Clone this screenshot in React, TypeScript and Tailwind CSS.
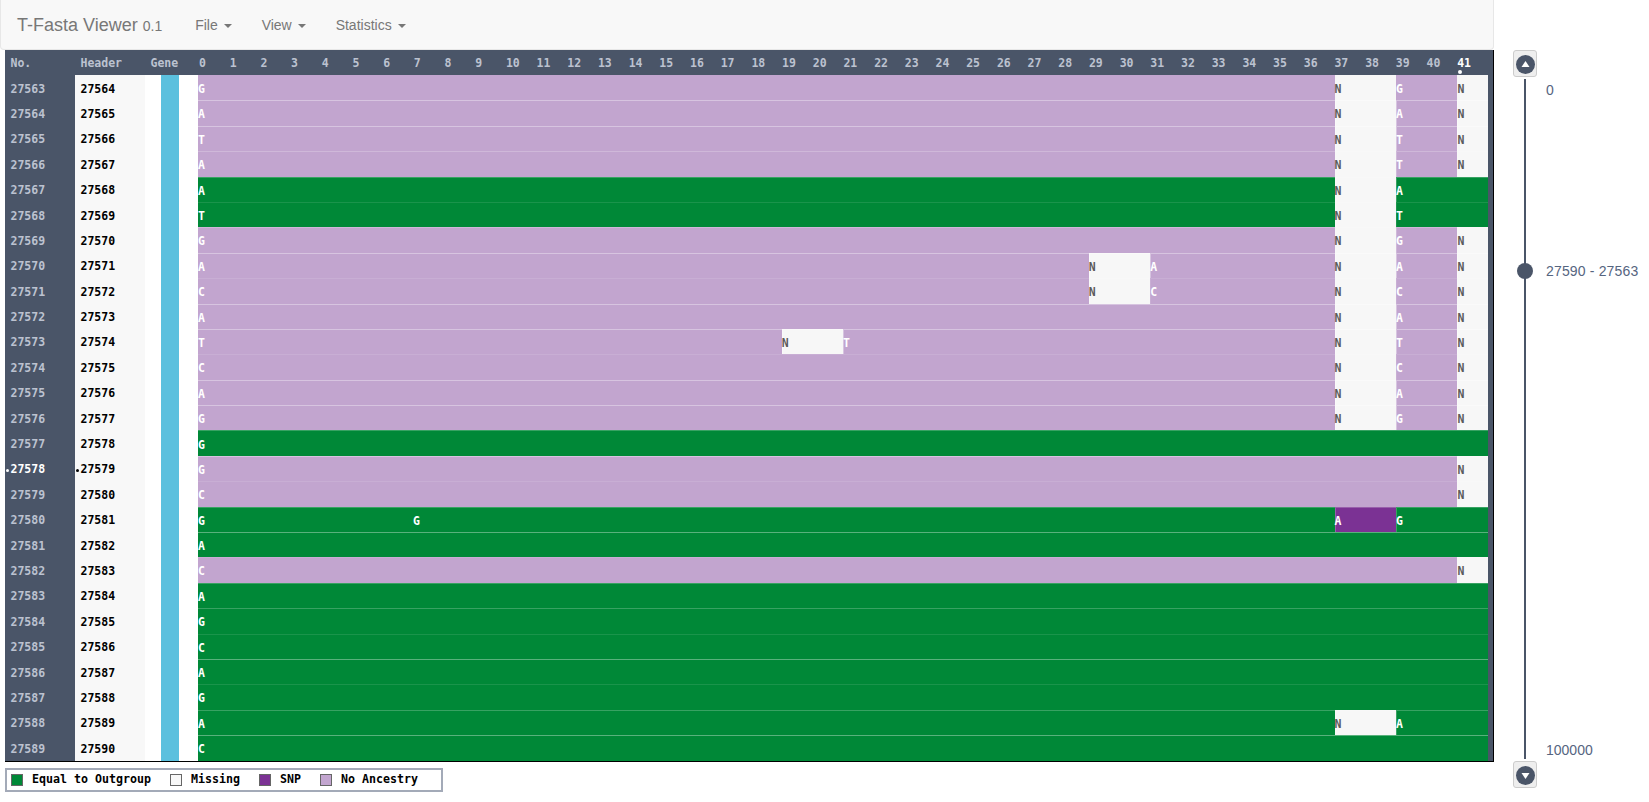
type Kind = "green" | "pur" | "miss" | "snp";
type Seg = [number, number, string, Kind];

const segClass: Record<Kind, string> = {
  green: "bg-[#008837] text-white",
  pur: "bg-[#c2a5cf] text-white",
  miss: "bg-[#f7f7f7] text-[#5c5c5c]",
  snp: "bg-[#7b3294] text-white",
};

// base row: long stretch, missing 37-38, then 39-40, then missing 41
const noAnc = (a: string, b: string = a): Seg[] => [
  [0, 37, a, "pur"],
  [37, 39, "N", "miss"],
  [39, 41, b, "pur"],
  [41, 42, "N", "miss"],
];
const gapped = (a: string, from: number): Seg[] => [
  [0, from, a, "pur"],
  [from, from + 2, "N", "miss"],
  [from + 2, 37, a, "pur"],
  [37, 39, "N", "miss"],
  [39, 41, a, "pur"],
  [41, 42, "N", "miss"],
];
const eqMiss = (a: string): Seg[] => [
  [0, 37, a, "green"],
  [37, 39, "N", "miss"],
  [39, 42, a, "green"],
];
const eq = (a: string): Seg[] => [[0, 42, a, "green"]];
const lastN = (a: string): Seg[] => [
  [0, 41, a, "pur"],
  [41, 42, "N", "miss"],
];

const rows: Seg[][] = [
  noAnc("G"),
  noAnc("A"),
  noAnc("T"),
  noAnc("A", "T"),
  eqMiss("A"),
  eqMiss("T"),
  noAnc("G"),
  gapped("A", 29),
  gapped("C", 29),
  noAnc("A"),
  gapped("T", 19),
  noAnc("C"),
  noAnc("A"),
  noAnc("G"),
  eq("G"),
  lastN("G"),
  lastN("C"),
  [
    [0, 7, "G", "green"],
    [7, 37, "G", "green"],
    [37, 39, "A", "snp"],
    [39, 42, "G", "green"],
  ],
  eq("A"),
  lastN("C"),
  eq("A"),
  eq("G"),
  eq("C"),
  eq("A"),
  eq("G"),
  eqMiss("A"),
  eq("C"),
];

// separator strength differs from row to row in the reference
const none = "border-transparent";
const hi = "border-white/35";
const mid = "border-white/22";
const lo = "border-white/10";
const lines = [
  none, hi, hi, mid, mid, lo, mid, hi, lo, hi, hi, lo, hi, hi,
  mid, hi, lo, mid, hi, lo, mid, mid, lo, hi, lo, mid, hi,
];

const columns = Array.from({ length: 42 }, (_, i) => i);
const FIRST = 27563;
const CURRENT = 27578;

const Caret = () => (
  <span className="ml-[2px] inline-block align-middle w-0 h-0 border-x-4 border-x-transparent border-t-4 border-t-[#777777]" />
);

const NavItem = ({ label }: { label: string }) => (
  <span className="px-[15px] text-sm text-[#777777]">
    {label} <Caret />
  </span>
);

const SliderButton = ({ up }: { up?: boolean }) => (
  <div className="w-6 h-[27px] pt-[2px] bg-[#eeeeee] border border-[#cccccc] rounded-[3px] flex items-center justify-center">
    <svg width="19" height="19" viewBox="0 0 19 19">
      <circle cx="9.5" cy="9.5" r="9.5" fill="#4a5568" />
      <path d={up ? "M9.5 6 L13.5 12 L5.5 12 Z" : "M9.5 13 L13.5 7 L5.5 7 Z"} fill="#ffffff" />
    </svg>
  </div>
);

const LegendItem = ({ color, label }: { color: string; label: string }) => (
  <div className="flex items-center">
    <span className={`w-3 h-3 border border-[#666666] mr-[9px] ${color}`} />
    <span>{label}</span>
  </div>
);

export default function App() {
  return (
    <div className="w-[1649px] h-[802px] overflow-hidden bg-white font-['Liberation_Sans',sans-serif]">
      <nav className="w-[1494px] h-[50px] bg-[#f8f8f8] border border-t-0 border-[#e7e7e7] rounded-b-[4px] flex items-center pl-4">
        <span className="text-lg text-[#777777] mr-[18px]">
          T-Fasta Viewer <span className="text-sm">0.1</span>
        </span>
        <NavItem label="File" />
        <NavItem label="View" />
        <NavItem label="Statistics" />
      </nav>

      <div className="flex">
        <div className="ml-[5px] w-[1489px] font-['DejaVu_Sans_Mono',monospace] font-bold text-[11.5px]">
          <div className="bg-[#4a5568] border-r border-b border-black text-[#bcc2d0]">
            <div className="h-[25px] pt-[2px] flex items-center">
              <div className="w-[70px] pl-[5.5px]">No.</div>
              <div className="w-[70px] pl-[5.5px]">Header</div>
              <div className="w-[53px] pl-[5.5px]">Gene</div>
              <div className="grid grid-cols-[repeat(42,30.7px)]">
                {columns.map((c) => (
                  <div key={c} className={`relative pl-px ${c === 41 ? "text-white" : ""}`}>
                    {c}
                    {c === 41 && (
                      <span className="absolute left-[2px] top-[15px] w-[4px] h-[4px] rounded-full bg-white" />
                    )}
                  </div>
                ))}
              </div>
            </div>

            {rows.map((segs, i) => {
              const no = FIRST + i;
              const active = no === CURRENT;
              return (
                <div key={no} className="h-[25.4px] flex">
                  <div className={`relative w-[70px] pl-[5.5px] pt-[3px] flex items-center ${active ? "text-white" : ""}`}>
                    {active && <span className="absolute left-[1px] top-[13px] w-[3px] h-[3px] rounded-full bg-white" />}
                    {no}
                  </div>
                  <div className="relative w-[70px] pl-[5.5px] pt-[3px] flex items-center bg-[#f8f8f8] text-black">
                    {active && <span className="absolute left-[1px] top-[13px] w-[3px] h-[3px] rounded-full bg-black" />}
                    {no + 1}
                  </div>
                  <div className="w-[53px] bg-white pl-[16px]">
                    <div className="w-[18px] h-full bg-[#5bc0de]" />
                  </div>
                  <div className="grid grid-cols-[repeat(42,30.73px)]">
                    {segs.map(([from, to, letter, kind], j) => {
                      const edge = j > 0 && segs[j - 1][3] !== kind;
                      return (
                        <div
                          key={from}
                          style={{ gridColumn: `${from + 1} / ${to + 1}` }}
                          className={`flex items-center pt-[3px] border-t ${lines[i]} ${segClass[kind]} ${edge ? "border-l" : ""}`}
                        >
                          <span className={edge ? "-ml-px" : ""}>{letter}</span>
                        </div>
                      );
                    })}
                  </div>
                </div>
              );
            })}
          </div>

          <div className="mt-[6px] w-[438px] h-[24px] pt-px border-2 border-[#a3aab8] flex items-center pl-[4px] gap-[19px] text-[11.63px] text-black">
            <LegendItem color="bg-[#008837]" label="Equal to Outgroup" />
            <LegendItem color="bg-[#f7f7f7]" label="Missing" />
            <LegendItem color="bg-[#7b3294]" label="SNP" />
            <LegendItem color="bg-[#c2a5cf]" label="No Ancestry" />
          </div>
        </div>

        <div className="relative ml-[19px] w-[136px] h-[738px] text-sm text-[#56657f]">
          <SliderButton up />
          <div className="w-[2px] h-[680px] my-[2px] ml-[11px] bg-[#4a5568]" />
          <SliderButton />
          <span className="absolute left-[11px] top-[213px] -ml-[7px] w-4 h-4 rounded-full bg-[#4a5568]" />
          <span className="absolute left-[33px] top-[30px]">0</span>
          <span className="absolute left-[33px] top-[211px] whitespace-nowrap tracking-[0.16px]">27590 - 27563</span>
          <span className="absolute left-[33px] top-[690px]">100000</span>
        </div>
      </div>
    </div>
  );
}
